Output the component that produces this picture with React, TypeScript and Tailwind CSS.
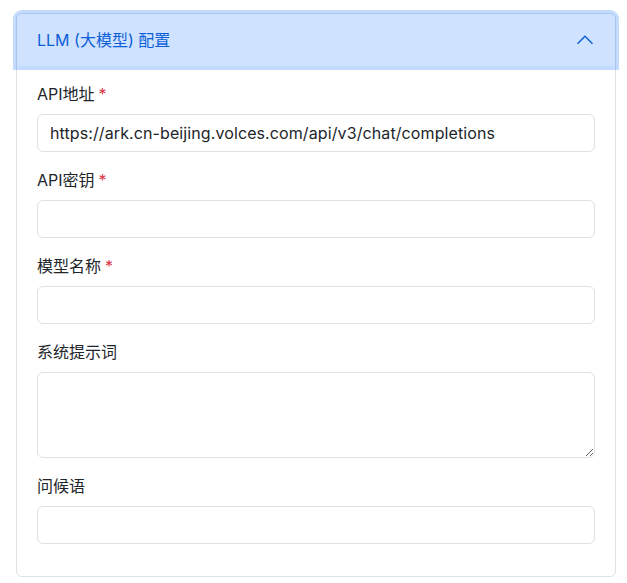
const fields = [
  { label: 'API地址', required: true, value: 'https://ark.cn-beijing.volces.com/api/v3/chat/completions' },
  { label: 'API密钥', required: true, value: '' },
  { label: '模型名称', required: true, value: '' },
  { label: '系统提示词', required: false, value: '', multiline: true },
  { label: '问候语', required: false, value: '' },
]

export default function App() {
  return (
    <div className="min-h-[583px] bg-white pt-[13px] pl-4 font-['Inter','Noto_Sans_CJK_SC',sans-serif] text-[#212529]">
      <div className="w-[600px] rounded-md border border-[#dee2e6]">
        {/* Accordion header */}
        <button
          type="button"
          className="relative z-10 flex w-full items-center justify-between rounded-t-[5px] bg-[#cfe2ff] px-5 py-[14px] text-left text-base leading-6 text-[#0c5fd8] ring-4 ring-[#0d6efd]/25"
        >
          <span>LLM (大模型) 配置</span>
          <svg viewBox="0 0 16 16" className="h-5 w-5" fill="none" stroke="currentColor" strokeWidth={1.1}>
            <polyline points="2,11 8,5 14,11" />
          </svg>
        </button>

        {/* Accordion body */}
        <div className="px-5 pt-4 pb-4">
          {fields.map((f) => (
            <div key={f.label} className="mb-4">
              <label className="mb-2 block text-base leading-6">
                {f.label}
                {f.required && <span className="ml-1 text-[#dc3545]">*</span>}
              </label>
              {f.multiline ? (
                <textarea
                  className="block h-[86px] w-full resize-y rounded-md border border-[#dee2e6] px-3 py-1.5 text-base leading-6 outline-none"
                  defaultValue={f.value}
                />
              ) : (
                <input
                  type="text"
                  className="block h-[38px] w-full rounded-md border border-[#dee2e6] px-3 text-base leading-6 tracking-[0.1px] outline-none"
                  defaultValue={f.value}
                />
              )}
            </div>
          ))}
        </div>
      </div>
    </div>
  )
}
